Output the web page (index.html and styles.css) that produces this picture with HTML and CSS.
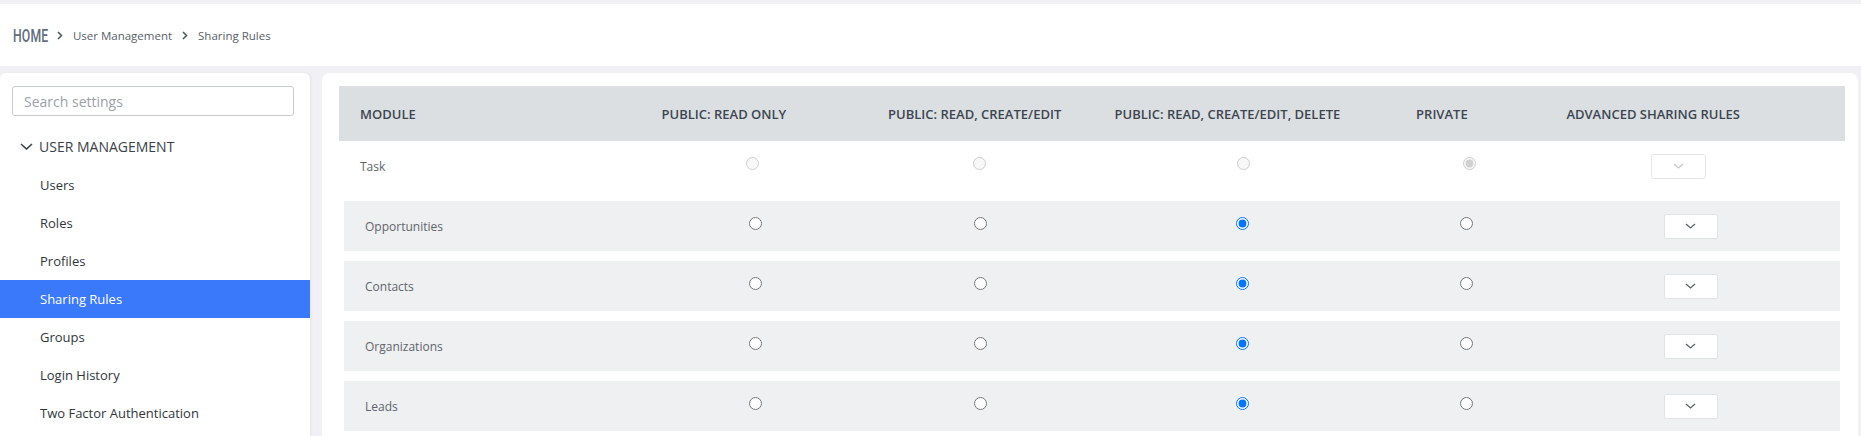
FILE: index.html
```html
<!DOCTYPE html>
<html lang="en">
<head>
    <meta charset="UTF-8">
    <meta name="viewport" content="width=device-width, initial-scale=1.0">
    <title>Sharing Rules</title>
    <link rel="stylesheet" href="styles.css">
</head>
<body>
    <div class="topbar">
        <span class="crumb-home">HOME</span>
        <svg class="crumb-sep" width="6" height="9" viewBox="0 0 6 9"><path d="M1 1l3.5 3.5L1 8" /></svg>
        <span class="crumb">User Management</span>
        <svg class="crumb-sep" width="6" height="9" viewBox="0 0 6 9"><path d="M1 1l3.5 3.5L1 8" /></svg>
        <span class="crumb">Sharing Rules</span>
    </div>

    <div class="layout">
        <!-- Settings menu -->
        <aside class="sidebar">
            <div class="search-box">
                <input type="text" class="search-input" placeholder="Search settings">
            </div>
            <div class="menu-title">
                <svg width="13" height="7" viewBox="0 0 13 7"><path d="M1 1l5.5 5 5.5-5" /></svg>
                <span>USER MANAGEMENT</span>
            </div>
            <ul class="menu">
                <li class="menu-item">Users</li>
                <li class="menu-item">Roles</li>
                <li class="menu-item">Profiles</li>
                <li class="menu-item active">Sharing Rules</li>
                <li class="menu-item">Groups</li>
                <li class="menu-item">Login History</li>
                <li class="menu-item">Two Factor Authentication</li>
            </ul>
        </aside>

        <!-- Sharing rules table -->
        <main class="content">
            <div class="rules-head">
                <div class="head-cell first">MODULE</div>
                <div class="head-cell">PUBLIC: READ ONLY</div>
                <div class="head-cell">PUBLIC: READ, CREATE/EDIT</div>
                <div class="head-cell">PUBLIC: READ, CREATE/EDIT, DELETE</div>
                <div class="head-cell">PRIVATE</div>
                <div class="head-cell">ADVANCED SHARING RULES</div>
            </div>

            <div class="rules-row locked">
                <div class="cell name">Task</div>
                <div class="cell"><input type="radio" name="task" disabled></div>
                <div class="cell"><input type="radio" name="task" disabled></div>
                <div class="cell"><input type="radio" name="task" disabled></div>
                <div class="cell"><input type="radio" name="task" disabled checked></div>
                <div class="cell">
                    <button class="adv-btn" disabled>
                        <svg width="11" height="6" viewBox="0 0 11 6"><path d="M1 1l4.5 4 4.5-4" /></svg>
                    </button>
                </div>
            </div>

            <div class="rules-row">
                <div class="cell name">Opportunities</div>
                <div class="cell"><input type="radio" name="opportunities"></div>
                <div class="cell"><input type="radio" name="opportunities"></div>
                <div class="cell"><input type="radio" name="opportunities" checked></div>
                <div class="cell"><input type="radio" name="opportunities"></div>
                <div class="cell">
                    <button class="adv-btn">
                        <svg width="11" height="6" viewBox="0 0 11 6"><path d="M1 1l4.5 4 4.5-4" /></svg>
                    </button>
                </div>
            </div>

            <div class="rules-row">
                <div class="cell name">Contacts</div>
                <div class="cell"><input type="radio" name="contacts"></div>
                <div class="cell"><input type="radio" name="contacts"></div>
                <div class="cell"><input type="radio" name="contacts" checked></div>
                <div class="cell"><input type="radio" name="contacts"></div>
                <div class="cell">
                    <button class="adv-btn">
                        <svg width="11" height="6" viewBox="0 0 11 6"><path d="M1 1l4.5 4 4.5-4" /></svg>
                    </button>
                </div>
            </div>

            <div class="rules-row">
                <div class="cell name">Organizations</div>
                <div class="cell"><input type="radio" name="organizations"></div>
                <div class="cell"><input type="radio" name="organizations"></div>
                <div class="cell"><input type="radio" name="organizations" checked></div>
                <div class="cell"><input type="radio" name="organizations"></div>
                <div class="cell">
                    <button class="adv-btn">
                        <svg width="11" height="6" viewBox="0 0 11 6"><path d="M1 1l4.5 4 4.5-4" /></svg>
                    </button>
                </div>
            </div>

            <div class="rules-row">
                <div class="cell name">Leads</div>
                <div class="cell"><input type="radio" name="leads"></div>
                <div class="cell"><input type="radio" name="leads"></div>
                <div class="cell"><input type="radio" name="leads" checked></div>
                <div class="cell"><input type="radio" name="leads"></div>
                <div class="cell">
                    <button class="adv-btn">
                        <svg width="11" height="6" viewBox="0 0 11 6"><path d="M1 1l4.5 4 4.5-4" /></svg>
                    </button>
                </div>
            </div>
        </main>
    </div>
</body>
</html>
```

FILE: styles.css
```css
* {
    margin: 0;
    padding: 0;
    box-sizing: border-box;
}

body {
    background-color: #f0f0f5;
    font-family: "Open Sans", Arial, sans-serif;
    color: #333a40;
    overflow: hidden;
}

/* Breadcrumb bar */
.topbar {
    margin-top: 4px;
    height: 62px;
    background-color: #fff;
    display: flex;
    align-items: center;
    padding-left: 13px;
}

.crumb-home {
    display: inline-block;
    font-family: Roboto, sans-serif;
    font-weight: 500;
    font-size: 18px;
    color: #5f6d7d;
    transform: scaleX(0.68);
    transform-origin: left center;
    margin-right: -18px;
    letter-spacing: 0.2px;
}

.crumb-sep {
    margin: 1px 10px 0;
}

.crumb-sep path {
    fill: none;
    stroke: #4d555d;
    stroke-width: 1.5;
}

.crumb {
    font-size: 11.5px;
    color: #58616a;
}

.layout {
    display: flex;
    gap: 12px;
    margin-top: 7px;
    padding-right: 3px;
    height: calc(100vh - 73px);
}

/* Sidebar */
.sidebar {
    width: 310px;
    flex-shrink: 0;
    background-color: #fff;
    border-radius: 6px 6px 0 0;
    box-shadow: 1px 0 3px rgba(0, 0, 0, 0.06);
    padding-top: 13px;
}

.search-box {
    padding: 0 16px 0 12px;
}

.search-input {
    width: 100%;
    height: 30px;
    border: 1px solid #c8cbcf;
    border-radius: 3px;
    padding: 0 11px;
    font-family: "Open Sans", sans-serif;
    font-size: 14px;
    outline: none;
}

.search-input::placeholder {
    color: #9ba1a8;
}

.menu-title {
    margin-top: 11px;
    height: 39px;
    display: flex;
    align-items: center;
    gap: 6px;
    padding-left: 20px;
    font-size: 14px;
    color: #3a4148;
}

.menu-title svg path {
    fill: none;
    stroke: #3a4148;
    stroke-width: 1.6;
}

.menu {
    list-style: none;
}

.menu-item {
    height: 38px;
    display: flex;
    align-items: center;
    padding-left: 40px;
    font-size: 13px;
    color: #30363c;
}

.menu-item.active {
    background-color: #3b79fb;
    color: #fff;
}

/* Rules table */
.content {
    flex: 1;
    background-color: #fff;
    border-radius: 8px 8px 0 0;
    padding: 13px 13px 0 17px;
}

.rules-head,
.rules-row {
    display: grid;
    grid-template-columns: 300fr 226fr 226fr 301fr 150fr 300fr;
    align-items: center;
}

.rules-head {
    height: 55px;
    background-color: #dcdfe2;
}

.head-cell {
    padding-left: 22px;
    font-size: 13px;
    font-weight: 600;
    color: #3c4650;
    white-space: nowrap;
}

.head-cell.first {
    padding-left: 21px;
}

.rules-row {
    height: 50px;
    background-color: #eff0f2;
    margin: 10px 5px 0;
}

.rules-row.locked {
    background-color: #fff;
    margin: 0;
}

.cell {
    display: flex;
    justify-content: center;
    align-items: center;
}

.cell.name {
    justify-content: flex-start;
    padding-left: 21px;
    font-size: 12px;
    color: #5e656c;
}

.cell input[type="radio"] {
    width: 13px;
    height: 13px;
    margin: 0 0 5px;
}

.adv-btn {
    width: 54px;
    height: 25px;
    background-color: #fff;
    border: 1px solid #e1e3e6;
    border-radius: 2px;
    display: flex;
    align-items: center;
    justify-content: center;
}

.adv-btn svg path {
    fill: none;
    stroke: #59626c;
    stroke-width: 1.3;
}

.adv-btn:disabled {
    width: 55px;
    border-color: #e4e6e8;
    border-radius: 3px;
    margin-right: 33px;
}

.adv-btn:disabled svg path {
    stroke: #c3c7cb;
}
```
